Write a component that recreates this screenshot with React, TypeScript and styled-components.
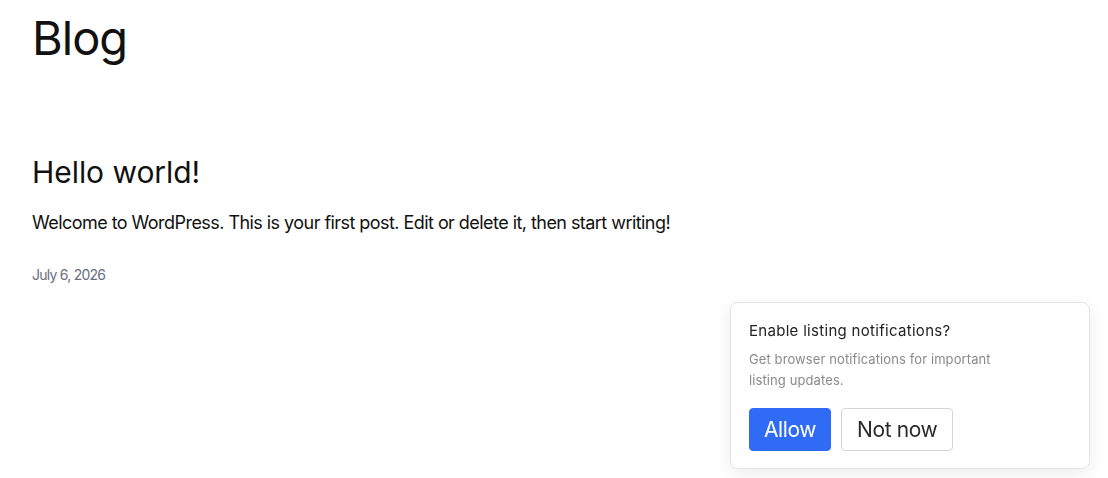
import styled, { createGlobalStyle } from "styled-components";

const GlobalStyle = createGlobalStyle`
    html, body {
        margin: 0;
        padding: 0;
        background: #ffffff;
        font-family: Inter, "Open Sans", sans-serif;
        color: #111111;
    }
`;

const Page = styled.main`
    padding: 8px 32px 0;
`;

const Title = styled.h1`
    margin: 0;
    font-size: 47px;
    font-weight: 400;
    line-height: 60px;
    letter-spacing: -1px;
`;

const Post = styled.article`
    margin-top: 86px;
    display: flex;
    flex-direction: column;
`;

const PostTitle = styled.h2`
    margin: 0;
    font-size: 30px;
    font-weight: 400;
    line-height: 36px;
    letter-spacing: -0.05px;
`;

const PostBody = styled.p`
    margin: 19px 0 0;
    font-size: 18px;
    line-height: 28px;
    letter-spacing: -0.55px;
`;

const PostDate = styled.time`
    margin-top: 28px;
    font-size: 14px;
    line-height: 20px;
    color: #6a6d7e;
    letter-spacing: -0.75px;
`;

const Prompt = styled.aside`
    position: fixed;
    right: 18px;
    bottom: 9px;
    width: 360px;
    box-sizing: border-box;
    padding: 17px 18px 17px;
    background: #ffffff;
    border: 1px solid #e3e4e8;
    border-radius: 8px;
    box-shadow: 0 4px 18px rgba(0, 0, 0, 0.08);
`;

const PromptTitle = styled.div`
    font-size: 15px;
    line-height: 22px;
    color: #222222;
    letter-spacing: 0.3px;
`;

const PromptText = styled.div`
    margin-top: 7px;
    max-width: 262px;
    font-size: 13px;
    line-height: 21px;
    color: #8a8a8a;
    letter-spacing: 0.1px;
`;

const Actions = styled.div`
    margin-top: 17px;
    display: flex;
    gap: 10px;
`;

const Button = styled.button<{ $primary?: boolean }>`
    height: 43px;
    padding: 0 ${(p) => (p.$primary ? "14px" : "15px")};
    border-radius: 4px;
    font-family: inherit;
    font-size: 21px;
    letter-spacing: -0.4px;
    cursor: pointer;
    border: 1px solid ${(p) => (p.$primary ? "#2f6bf5" : "#d3d5da")};
    background: ${(p) => (p.$primary ? "#2f6bf5" : "#ffffff")};
    color: ${(p) => (p.$primary ? "#ffffff" : "#2a2a2a")};
`;

export default function App() {
    return (
        <>
            <GlobalStyle />
            <Page>
                <Title>Blog</Title>
                <Post>
                    <PostTitle>Hello world!</PostTitle>
                    <PostBody>
                        Welcome to WordPress. This is your first post. Edit or delete it, then start writing!
                    </PostBody>
                    <PostDate>July 6, 2026</PostDate>
                </Post>
            </Page>
            <Prompt>
                <PromptTitle>Enable listing notifications?</PromptTitle>
                <PromptText>Get browser notifications for important listing updates.</PromptText>
                <Actions>
                    <Button $primary>Allow</Button>
                    <Button>Not now</Button>
                </Actions>
            </Prompt>
        </>
    );
}
